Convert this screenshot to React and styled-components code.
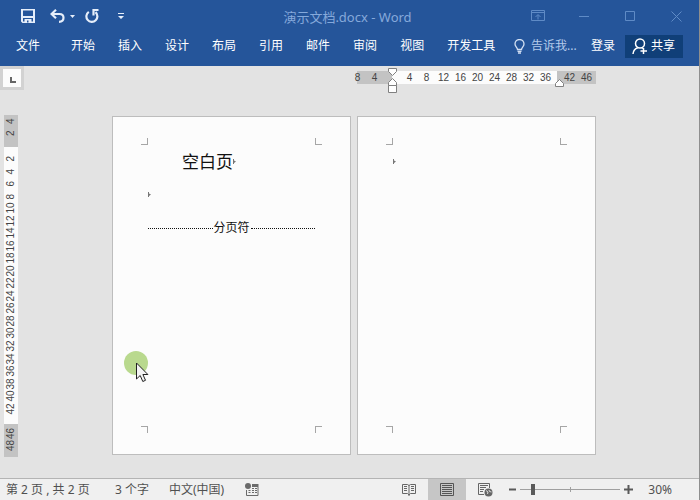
import styled, { createGlobalStyle, css } from 'styled-components';

const tabs = ['开始', '插入', '设计', '布局', '引用', '邮件', '审阅', '视图', '开发工具'];
const range = (from, to, step) => Array.from({ length: (to - from) / step + 1 }, (_, i) => from + i * step);

const App = () => {
  return (
    <Window>
      <GlobalStyle />
      <Header>
        <TitleBar>
          <QuickAccess>
            <IconButton aria-label='保存'>
              <SaveIcon />
            </IconButton>
            <UndoGroup>
              <IconButton aria-label='撤消'>
                <UndoIcon />
              </IconButton>
              <IconButton aria-label='撤消选项'>
                <CaretIcon />
              </IconButton>
            </UndoGroup>
            <IconButton aria-label='重复'>
              <RedoIcon />
            </IconButton>
            <IconButton $spaced aria-label='自定义快速访问工具栏'>
              <CustomizeIcon />
            </IconButton>
          </QuickAccess>
          <Title>演示文档.docx - Word</Title>
          <WindowControls>
            <WindowButton aria-label='功能区显示选项'>
              <svg width='14' height='12' viewBox='0 0 14 12'>
                <path d='M.5.5h13v10H.5zM.5 2.500h13M7 9.500V5M4.500 7 7 4.500 9.500 7' />
              </svg>
            </WindowButton>
            <WindowButton aria-label='最小化'>
              <svg width='11' height='11' viewBox='0 0 11 11'>
                <path d='M0 5.500h10' />
              </svg>
            </WindowButton>
            <WindowButton aria-label='最大化'>
              <svg width='11' height='11' viewBox='0 0 11 11'>
                <path d='M.5.5h9v9h-9z' />
              </svg>
            </WindowButton>
            <WindowButton aria-label='关闭'>
              <svg width='11' height='11' viewBox='0 0 11 11'>
                <path d='M.5.5l10 10M10.500.5l-10 10' />
              </svg>
            </WindowButton>
          </WindowControls>
        </TitleBar>
        <Ribbon>
          <Tab>文件</Tab>
          <Tabs>
            {tabs.map((tab) => (
              <Tab key={tab}>{tab}</Tab>
            ))}
          </Tabs>
          <Account>
            <TellMe>
              <BulbIcon />
              <input type='text' placeholder='告诉我...' aria-label='告诉我' />
            </TellMe>
            <Tab>登录</Tab>
            <ShareButton>
              <ShareIcon />
              共享
            </ShareButton>
          </Account>
        </Ribbon>
      </Header>

      <Workspace>
        <Corner>
          <TabStop aria-label='左对齐式制表符' />
        </Corner>
        <RulerRow>
          <Ruler>
            <RulerPart $size={35} $margin $end>
              <Tick>8</Tick>
              <Tick>4</Tick>
            </RulerPart>
            <RulerPart $size={165}>
              {range(4, 36, 4).map((n) => (
                <Tick key={n}>{n}</Tick>
              ))}
              <IndentMarker />
              <RightMarker />
            </RulerPart>
            <RulerPart $margin $rest>
              <Tick>42</Tick>
              <Tick>46</Tick>
            </RulerPart>
          </Ruler>
        </RulerRow>
        <SideRuler>
          <SidePart $size={32} $margin $end>
            <SideTick>4</SideTick>
            <SideTick>2</SideTick>
          </SidePart>
          <SidePart $size={277}>
            {range(2, 42, 2).map((n) => (
              <SideTick key={n} $fill>
                {n}
              </SideTick>
            ))}
          </SidePart>
          <SidePart $size={33} $margin>
            <SideTick>46</SideTick>
            <SideTick>48</SideTick>
          </SidePart>
        </SideRuler>
        <Pages>
          <Page>
            <MarkRow>
              <CropMark $v='bottom' $h='right' />
              <CropMark $v='bottom' $h='left' />
            </MarkRow>
            <Body>
              <Heading>
                空白页
                <ParagraphMark />
              </Heading>
              <Paragraph>
                <ParagraphMark />
              </Paragraph>
              <PageBreak>分页符</PageBreak>
            </Body>
            <MarkRow>
              <CropMark $v='top' $h='right' />
              <CropMark $v='top' $h='left' />
            </MarkRow>
            <Pointer />
          </Page>
          <Page>
            <MarkRow>
              <CropMark $v='bottom' $h='right' />
              <CropMark $v='bottom' $h='left' />
            </MarkRow>
            <Body>
              <Paragraph>
                <ParagraphMark />
              </Paragraph>
            </Body>
            <MarkRow>
              <CropMark $v='top' $h='right' />
              <CropMark $v='top' $h='left' />
            </MarkRow>
          </Page>
        </Pages>
      </Workspace>

      <StatusBar>
        <StatusInfo>
          <span>第 2 页 , 共 2 页</span>
          <span>3 个字</span>
          <span>中文(中国)</span>
          <StatusButton aria-label='宏录制'>
            <MacroIcon />
          </StatusButton>
        </StatusInfo>
        <StatusView>
          <ViewButton aria-label='阅读视图'>
            <ReadIcon />
          </ViewButton>
          <ViewButton $active aria-label='页面视图'>
            <PrintIcon />
          </ViewButton>
          <ViewButton aria-label='Web 版式视图'>
            <WebIcon />
          </ViewButton>
          <Zoom>
            <StatusButton aria-label='缩小'>
              <svg width='7' height='9' viewBox='0 0 7 9'>
                <path d='M0 3.500h7v2H0z' fill='#5a5a5a' />
              </svg>
            </StatusButton>
            <Slider type='range' min='0' max='100' defaultValue='11' aria-label='显示比例' />
            <StatusButton aria-label='放大'>
              <svg width='9' height='9' viewBox='0 0 9 9'>
                <path d='M0 3.500h3.500V0h2v3.500H9v2H5.500V9h-2V5.500H0z' fill='#5a5a5a' />
              </svg>
            </StatusButton>
          </Zoom>
          <span>30%</span>
        </StatusView>
      </StatusBar>
    </Window>
  );
};
export default App;

const SaveIcon = () => (
  <svg width='14' height='14' viewBox='0 0 14 14' fill='#e6eefa'>
    <path
      fillRule='evenodd'
      d='M0 0h14v14H1.500L0 12.500zM2 1.500v5.500h10V1.500zM2 9v3.500h1.500V10h7v2.500H12V9zM6 11.500v2h1.500v-2z'
    />
  </svg>
);

const UndoIcon = () => (
  <svg width='15' height='14' viewBox='0 0 15 14' fill='none' stroke='#e6eefa' strokeWidth='2.200'>
    <path d='M6 .8 1.500 5 6 9.200M2 5h7.500c2.500 0 4 1.600 4 3.800 0 2.400-1.700 4-4.500 4' />
  </svg>
);

const CaretIcon = () => (
  <svg width='5' height='3' viewBox='0 0 5 3' fill='#e6eefa'>
    <path d='M0 0h5L2.500 3z' />
  </svg>
);

const RedoIcon = () => (
  <svg width='14' height='14' viewBox='0 0 14 14' fill='none' stroke='#e6eefa' strokeWidth='2.200'>
    <path d='M3.800 2.800A5.500 5.500 0 1 0 10.500 3.200' />
    <path d='M13.500 1H8.500v5.500' />
  </svg>
);

const CustomizeIcon = () => (
  <svg width='6' height='7' viewBox='0 0 6 7' fill='#e6eefa'>
    <path d='M0 0h6v1H0zM0 3h6L3 6z' />
  </svg>
);

const BulbIcon = () => (
  <svg width='11' height='15' viewBox='0 0 11 15' fill='none' stroke='#d3e0f3' strokeWidth='1.300'>
    <path d='M3.500 10.500C3.500 8.500 1 7.500 1 5a4.500 4.500 0 0 1 9 0c0 2.500-2.500 3.500-2.500 5.500zM3.500 12.300h4M4 14h3' />
  </svg>
);

const ShareIcon = () => (
  <svg width='16' height='17' viewBox='0 0 16 17' fill='none' stroke='#fff' strokeWidth='1.500'>
    <circle cx='8' cy='5.500' r='4.500' />
    <path d='M1 16c.3-3.500 2-5.500 4.800-6.300M9.800 9.500l1.200 1M11.500 10v6M8.500 13h6.500' />
  </svg>
);

const MacroIcon = () => (
  <svg width='14' height='14' viewBox='0 0 14 14' fill='none' stroke='#6a6a6a'>
    <circle cx='3' cy='3' r='3' fill='#6a6a6a' stroke='none' />
    <path d='M7 1h6.500v3H7z' fill='#6a6a6a' stroke='none' />
    <path d='M1.500 7v5.500h11.500V4' />
    <path d='M3.500 7.500h2M7 7.500h2M10 7.500h2M3.500 9.500h2M7 9.500h2M10 9.500h2M7 5.500h2M10 5.500h2' />
  </svg>
);

const ReadIcon = () => (
  <svg width='14' height='14' viewBox='0 0 14 14' fill='none' stroke='#666'>
    <path d='M.5 1.500h5L7 2.500l1.500-1h5v9h-5L7 12l-1.500-1.500h-5zM7 2v11' />
    <path d='M2 3.500h3M2 5.500h3M2 7.500h3M9 3.500h3M9 5.500h3M9 7.500h3' />
  </svg>
);

const PrintIcon = () => (
  <svg width='14' height='13' viewBox='0 0 14 13' fill='none' stroke='#555'>
    <path d='M.5.5h13v12H.5zM2 2.500h10M2 4.500h10M2 6.500h10M2 8.500h10M2 10.500h10' />
  </svg>
);

const WebIcon = () => (
  <svg width='15' height='14' viewBox='0 0 15 14' fill='none' stroke='#666'>
    <path d='M6 11.500H.5V.5h11V5M2 2.500h8M2 4.500h6M2 6.500h4M2 8.500h3' />
    <circle cx='10.500' cy='9.500' r='4' fill='#666' stroke='none' />
    <path d='M8 7.500l2 1.500-.5 2M11 7l.5 1.500 2 .5' stroke='#ddd' />
  </svg>
);

const GlobalStyle = createGlobalStyle`
  *, *::before, *::after {
    box-sizing: border-box;
  }
  body {
    margin: 0;
    font: 12px/16px 'Noto Sans', 'Noto Sans CJK SC', sans-serif;
    background: #e3e3e3;
  }
  button, input {
    font: inherit;
    color: inherit;
    padding: 0;
    margin: 0;
    border: 0;
    background: none;
  }
  svg {
    display: block;
    flex: none;
  }
`;

const Window = styled.div`
  display: flex;
  flex-direction: column;
  min-height: 100vh;
  border-right: 1px solid #8f8f8f;
`;

const Header = styled.header`
  background: #25559a;
  color: #fff;
  padding-bottom: 6px;
`;

const TitleBar = styled.div`
  display: grid;
  grid-template-columns: 1fr auto 1fr;
  align-items: center;
  height: 32px;
`;

const QuickAccess = styled.div`
  display: flex;
  align-items: center;
  gap: 10px;
  padding-left: 21px;
`;

const UndoGroup = styled.div`
  display: flex;
  align-items: center;
  gap: 5px;
  padding-left: 5px;
`;

const IconButton = styled.button`
  display: flex;
  margin-left: ${(props) => (props.$spaced ? '9px' : 0)};
`;

const Title = styled.div`
  padding: 2px 4px 0 0;
  font-size: 13px;
  color: #85a9db;
`;

const WindowControls = styled.div`
  display: flex;
  justify-content: flex-end;
`;

const WindowButton = styled.button`
  width: 46px;
  height: 30px;
  display: flex;
  align-items: center;
  justify-content: center;

  svg {
    fill: none;
    stroke: #5f8bc6;
  }
`;

const Ribbon = styled.div`
  display: flex;
  align-items: center;
  height: 28px;
  padding: 0 16px;
`;

const Tabs = styled.nav`
  display: flex;
  gap: 23px;
  margin-left: 31px;
`;

const Tab = styled.button`
  white-space: nowrap;
`;

const Account = styled.div`
  display: flex;
  align-items: center;
  gap: 10px;
  margin-left: auto;
`;

const TellMe = styled.label`
  display: flex;
  align-items: center;
  gap: 6px;
  color: #b4cbeb;

  input {
    width: 50px;
  }
  input::placeholder {
    color: inherit;
    opacity: 1;
  }
`;

const ShareButton = styled.button`
  display: flex;
  align-items: center;
  gap: 3px;
  height: 23px;
  padding: 0 8px 0 7px;
  background: #103f78;
`;

const Workspace = styled.main`
  flex: 1;
  display: grid;
  grid-template-columns: 24px 1fr;
  grid-template-rows: 24px 1fr;
  background: #e3e3e3;
`;

const Corner = styled.div`
  padding: 3px;
  background: #d2d2d2;
`;

const TabStop = styled.button`
  display: block;
  width: 18px;
  height: 18px;
  background: #fcfcfc;

  &::before {
    content: '';
    display: block;
    width: 6px;
    height: 6px;
    margin: 4px 0 0 7px;
    border: solid #666;
    border-width: 0 0 2px 2px;
  }
`;

const RulerRow = styled.div`
  display: grid;
  grid-template-columns: 239px 239px;
  gap: 6px;
  justify-content: center;
  padding: 5px 15px 0 0;
`;

const Ruler = styled.div`
  grid-column: 2;
  display: flex;
  height: 13px;
  font: 10px/13px 'Liberation Sans', sans-serif;
  color: #444;
`;

const RulerPart = styled.div`
  position: relative;
  display: flex;
  flex: none;
  width: ${(props) => props.$size}px;
  padding-left: 9px;
  background: ${(props) => (props.$margin ? '#c3c3c3' : '#fcfcfc')};
  ${(props) =>
    props.$end &&
    css`
      justify-content: flex-end;
      padding: 0 9px 0 0;
    `}
  ${(props) =>
    props.$rest &&
    css`
      flex: 1;
      width: auto;
      padding-left: 4px;
    `}
`;

const Tick = styled.span`
  flex: none;
  width: 17px;
  text-align: center;
`;

const IndentMarker = () => (
  <LeftMarkerSvg width='9' height='26' viewBox='0 0 9 26'>
    <path d='M.5.5h8v3l-4 4-4-4zM.5 17.500v-3l4-4 4 4v3zM.5 17.500h8v7h-8z' />
  </LeftMarkerSvg>
);

const RightMarker = () => (
  <RightMarkerSvg width='9' height='9' viewBox='0 0 9 9'>
    <path d='M.5 7.500v-3l4-4 4 4v3z' />
  </RightMarkerSvg>
);

const LeftMarkerSvg = styled.svg`
  position: absolute;
  left: -4px;
  top: -3px;
  fill: #fff;
  stroke: #808080;
`;

const RightMarkerSvg = styled(LeftMarkerSvg)`
  left: auto;
  right: -7px;
  top: 8px;
  z-index: 1;
`;

const SideRuler = styled.div`
  width: 14px;
  margin: 25px 0 0 4px;
  font: 10px/14px 'Liberation Sans', sans-serif;
  color: #444;
`;

const SidePart = styled.div`
  display: flex;
  flex-direction: column;
  height: ${(props) => props.$size}px;
  padding: ${(props) => (props.$margin ? '3px 0 0' : '5px 0 9px')};
  background: ${(props) => (props.$margin ? '#c3c3c3' : '#fcfcfc')};
  ${(props) =>
    props.$end &&
    css`
      justify-content: flex-end;
      padding: 0 0 8px;
    `}
`;

const SideTick = styled.span`
  flex: ${(props) => (props.$fill ? '1 1 0' : '0 0 12px')};
  min-height: 0;
  writing-mode: vertical-rl;
  transform: rotate(180deg);
  display: flex;
  align-items: center;
  justify-content: center;
`;

const Pages = styled.div`
  display: flex;
  justify-content: center;
  align-items: flex-start;
  gap: 6px;
  padding: 26px 15px 23px 0;
`;

const Page = styled.article`
  position: relative;
  display: flex;
  flex-direction: column;
  width: 239px;
  height: 339px;
  padding: 21px 28px;
  background: #fcfcfc;
  border: 1px solid #bdbdbd;
`;

const MarkRow = styled.div`
  display: flex;
  justify-content: space-between;
`;

const CropMark = styled.span`
  width: 7px;
  height: 7px;
  border: 0 solid #a6a6a6;
  border-${(props) => props.$v}-width: 1px;
  border-${(props) => props.$h}-width: 1px;
`;

const Body = styled.div`
  flex: 1;
  padding: 0 7px;
  color: #111;
`;

const Paragraph = styled.p`
  display: flex;
  align-items: center;
  height: 33px;
  margin: 0;
`;

const Heading = styled.h1`
  display: flex;
  align-items: center;
  height: 33px;
  margin: 0;
  padding-left: 34px;
  font-size: 17px;
  font-weight: 400;
`;

const PageBreak = styled(Paragraph)`
  gap: 1px;

  &::before,
  &::after {
    content: '';
    flex: 1;
    padding-top: 2px;
    border-bottom: 1px dotted #111;
  }
`;

const ParagraphMark = () => (
  <svg width='3' height='5' viewBox='0 0 3 5' fill='#777'>
    <path d='M0 0h1v1.500L3 2.500 1 4v1H0z' />
  </svg>
);

const Pointer = () => (
  <PointerSvg width='26' height='34' viewBox='0 0 26 34'>
    <circle cx='12' cy='12' r='12' fill='#b9d98e' />
    <path
      d='M12.500 12v16l3.700-3.500 2.600 6 2.700-1.200-2.600-5.800h5z'
      fill='#f4f4f4'
      stroke='#222'
    />
  </PointerSvg>
);

const PointerSvg = styled.svg`
  position: absolute;
  left: 11px;
  top: 234px;
`;

const StatusBar = styled.footer`
  display: flex;
  justify-content: space-between;
  height: 22px;
  border-top: 1px solid #b4b4b4;
  background: #f0f0f0;
  color: #505050;
`;

const StatusInfo = styled.div`
  display: grid;
  grid-template-columns: 90px 35px 57px auto;
  align-items: center;
  gap: 19px;
  padding-left: 6px;
  white-space: nowrap;
`;

const StatusView = styled.div`
  display: flex;
  align-items: center;
  padding-right: 27px;
`;

const StatusButton = styled.button`
  display: flex;
`;

const ViewButton = styled.button`
  display: flex;
  align-items: center;
  justify-content: center;
  width: 38px;
  height: 100%;
  background: ${(props) => (props.$active ? '#c6c6c6' : 'none')};
`;

const Zoom = styled.div`
  display: flex;
  align-items: center;
  gap: 4px;
  margin: 0 15px 0 5px;
`;

const Slider = styled.input`
  appearance: none;
  width: 100px;
  height: 11px;
  background:
    linear-gradient(#a0a0a0, #a0a0a0) center / 1px 5px no-repeat,
    linear-gradient(#a0a0a0, #a0a0a0) center / 100% 1px no-repeat;

  &::-webkit-slider-thumb {
    appearance: none;
    width: 4px;
    height: 11px;
    background: #5a5a5a;
  }
`;
